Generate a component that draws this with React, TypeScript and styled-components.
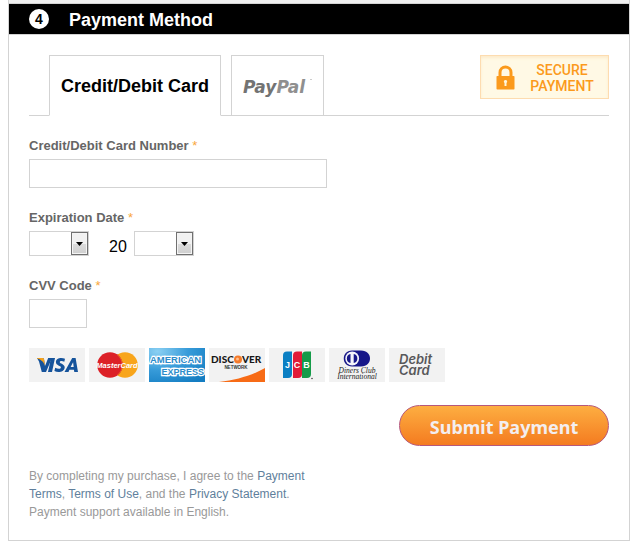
import React, { useId } from 'react';
import styled, { createGlobalStyle } from 'styled-components';

const line = '#d3d3d3';

const GlobalStyle = createGlobalStyle`
  *, *::before, *::after { box-sizing: border-box; }
  body {
    margin: 0;
    background: #fff;
    font-family: "Liberation Sans", Arial, sans-serif;
  }
`;

const Page = styled.main`
  padding: 0 13px 13px 8px;
`;

const Panel = styled.section`
  border: 1px solid ${line};
  border-top: 0;
`;

const PreviousEdge = styled.div`
  height: 4px;
  background: #f0f0f0;
  border-bottom: 1px solid ${line};
`;

const Header = styled.header`
  display: flex;
  align-items: center;
  gap: 20px;
  height: 31px;
  padding-left: 20px;
  background: #000;
  border-bottom: 1px solid ${line};
  color: #fff;
`;

const Step = styled.span`
  display: grid;
  place-items: center;
  width: 20px;
  height: 20px;
  border-radius: 50%;
  background: #fff;
  color: #000;
  font-size: 14px;
  font-weight: bold;
`;

const Title = styled.h2`
  margin: 0;
  padding-top: 2px;
  font-size: 18px;
  line-height: 20px;
`;

const Body = styled.form`
  padding: 20px 20px 19px;
`;

const TopRow = styled.div`
  display: flex;
  justify-content: space-between;
  align-items: flex-start;
  border-bottom: 1px solid ${line};
`;

const Tabs = styled.div`
  display: flex;
  gap: 10px;
  padding-left: 20px;
  margin-bottom: -1px;
`;

const Tab = styled.button<{ $active?: boolean }>`
  height: 61px;
  padding: 2px 11px 0;
  border: 1px solid ${line};
  border-bottom-color: ${(p) => (p.$active ? '#fff' : line)};
  background: #fff;
  color: #000;
  font: bold 18px "Liberation Sans", Arial, sans-serif;

  svg { display: block; }
`;

const Secure = styled.div`
  display: flex;
  align-items: center;
  justify-content: space-between;
  width: 129px;
  height: 44px;
  padding: 0 14px 0 15px;
  border: 1px solid #fddcb0;
  background: #fff9e5;
  box-shadow: inset 0 2px 3px #fdebcb;
  color: #fb9a1c;
  font: 500 14px/16px Roboto, "Liberation Sans", sans-serif;
  text-align: center;
`;

const SecureText = styled.span`
  width: 64px;
  padding-top: 2px;
`;

const Field = styled.div`
  display: flex;
  flex-direction: column;
  align-items: flex-start;
  gap: 3px;
  margin-top: 20px;
`;

const Label = styled.label`
  color: #666;
  font-size: 13px;
  font-weight: bold;
  line-height: 20px;
`;

const Star = styled.span`
  color: #f9a63a;
  font-weight: normal;
`;

const TextInput = styled.input<{ $width: number }>`
  width: ${(p) => p.$width}px;
  max-width: 100%;
  height: 29px;
  padding: 0 6px;
  border: 1px solid ${line};
  background: #fff;
  font: 14px "Liberation Sans", Arial, sans-serif;
`;

const DateRow = styled.div`
  display: flex;
  align-items: center;
  font-size: 16px;
`;

const Century = styled.span`
  padding: 6px 7px 0 20px;
  line-height: 19px;
`;

const SelectBox = styled.span`
  position: relative;
  display: inline-flex;
`;

const Select = styled.select`
  appearance: none;
  width: 60px;
  height: 25px;
  padding: 0 20px 0 4px;
  border: 1px solid ${line};
  border-radius: 0;
  background: #fff;
  font: 13px "Liberation Sans", Arial, sans-serif;
`;

const Arrow = styled.span`
  position: absolute;
  inset: 1px 1px 1px auto;
  display: grid;
  place-items: center;
  width: 17px;
  border: 1px solid #707070;
  box-shadow: inset 0 0 0 1px #f4f4f4;
  background: linear-gradient(#f1f1f1 0 50%, #dcdcdc 50%, #cfcfcf);
  pointer-events: none;
`;

const Cards = styled.ul`
  display: flex;
  flex-wrap: wrap;
  gap: 4px;
  margin: 20px 0 0;
  padding: 0;
  list-style: none;
`;

const Card = styled.li`
  width: 56px;
  height: 34px;
  background: #f2f2f2;

  svg { display: block; }
`;

const Submit = styled.button`
  display: block;
  width: 210px;
  height: 41px;
  margin: 23px 0 0 auto;
  padding: 2px 0 0;
  border: 1px solid #b5587c;
  border-radius: 21px;
  background: linear-gradient(#fdae41, #f47b20);
  color: #f3eef0;
  font: bold 18px "Noto Sans", sans-serif;
`;

const Terms = styled.p`
  max-width: 300px;
  margin: 21px 0 0;
  color: #999;
  font-size: 12px;
  line-height: 18px;
`;

const Link = styled.a`
  color: #5f7f9c;
  text-decoration: none;
`;

function PayPalLogo() {
  return (
    <svg width="69" height="32" viewBox="0 0 69 32" role="img" aria-label="PayPal">
      <text x="0" y="22" fontFamily="DejaVu Sans" fontWeight="bold" fontStyle="italic" fontSize="17" fill="#737373">
        Pay<tspan fill="#8f8f8f">Pal</tspan>
      </text>
      <path d="M67 8.500h2" stroke="#ccc" />
    </svg>
  );
}

function Padlock() {
  return (
    <svg width="19" height="25" viewBox="0 0 19 25" aria-hidden="true">
      <path d="M4 12V7.500a5.500 5.500 0 0 1 11 0V12" fill="none" stroke="#fb9a1c" strokeWidth="3" />
      <rect x="0.500" y="11" width="18" height="13.500" rx="0.800" fill="#fb9a1c" />
      <path d="M9.500 15a1.600 1.600 0 0 1 1 2.900V21h-2v-3.100a1.600 1.600 0 0 1 1-2.900Z" fill="#fff6dc" />
    </svg>
  );
}

function Logo({ name, children }: { name: string; children: React.ReactNode }) {
  return (
    <Card>
      <svg width="56" height="34" viewBox="0 0 56 34" role="img" aria-label={name}>
        {children}
      </svg>
    </Card>
  );
}

function Visa() {
  return (
    <Logo name="Visa">
      <path d="M22 10h4l-3 14h-4z" fill="#15539b" />
      <path d="M8 10h5.500c1 0 1.500.6 1.600 1.500L16 18l3.200-8H23l-6 14h-4.200L10 13.500Z" fill="#15539b" />
      <path d="M8 10h5.500c1 0 1.500.6 1.600 1.500L16 18c-1-3.500-3.500-6.500-8-7.500Z" fill="#f6a21b" />
      <path d="M36 10.700c-3.800-1.700-9-.8-9.100 3.200 0 3.700 5.100 3.600 5 5.500-.1 1.900-3.500 1.400-5.700.3l-.8 3.400c3.600 1.700 10 1.100 10.300-3.600.2-3.600-5-3.900-4.900-5.300.1-1.600 2.900-1.200 4.500-.4Z" fill="#15539b" />
      <path fillRule="evenodd" d="M43.200 10h3.400L49 24h-3.700l-.4-2.300h-4.500L39.500 24h-4Zm.9 4.200L41.600 19h3.100Z" fill="#15539b" />
    </Logo>
  );
}

function MasterCard() {
  return (
    <Logo name="MasterCard">
      <circle cx="36" cy="17" r="12.800" fill="#f8a51b" />
      <circle cx="21" cy="17" r="12.800" fill="#dc2027" />
      <path d="M28.500 7a12.800 12.800 0 0 1 0 20" fill="none" stroke="#e8632a" strokeWidth="1" />
      <text x="28" y="20" textAnchor="middle" fontFamily="Liberation Sans" fontWeight="bold" fontStyle="italic" fontSize="7.500" fill="#fff">MasterCard</text>
    </Logo>
  );
}

function Amex() {
  const id = useId();
  return (
    <Logo name="American Express">
      <defs>
        <radialGradient id={id} cx="0.150" cy="0.100" r="1.100">
          <stop offset="0" stopColor="#8bd0f3" />
          <stop offset="0.500" stopColor="#379bd9" />
          <stop offset="1" stopColor="#147dc2" />
        </radialGradient>
      </defs>
      <rect width="56" height="34" fill={`url(#${id})`} />
      <g fontFamily="Liberation Sans" fontWeight="bold" fontSize="9.500" fill="#2b8bca" stroke="#fff" strokeWidth="2.400" paintOrder="stroke">
        <text x="1" y="15">AMERICAN</text>
        <text x="55" y="27" textAnchor="end" fontSize="9">EXPRESS</text>
      </g>
    </Logo>
  );
}

function Discover() {
  return (
    <Logo name="Discover Network">
      <path d="M10 34C28 32 44 27 56 20v14Z" fill="#f76b16" />
      <g fontFamily="Lato" fontWeight="900" fontSize="10" fill="#171717">
        <text x="2" y="15">DISC</text>
        <text x="33" y="15">VER</text>
      </g>
      <circle cx="29" cy="11.500" r="4" fill="#f47a2a" />
      <circle cx="28.500" cy="11" r="1.500" fill="#ffbd8b" />
      <text x="27" y="21" textAnchor="middle" fontFamily="Liberation Sans" fontWeight="bold" fontSize="4.500" fill="#333">NETWORK</text>
    </Logo>
  );
}

function Jcb() {
  return (
    <Logo name="JCB">
      <path d="M18 3.500h5V26q0 4-4 4h-5V7.500q0-4 4-4Z" fill="#0b7fc3" />
      <path d="M28 3.500h5V26q0 4-4 4h-5V7.500q0-4 4-4Z" fill="#e11b38" />
      <path d="M37 3.500h5V26q0 4-4 4h-5V7.500q0-4 4-4Z" fill="#159b49" />
      <g fontFamily="Liberation Sans" fontWeight="bold" fontSize="9" fill="#fff" textAnchor="middle">
        <text x="18.500" y="20">J</text>
        <text x="28" y="20">C</text>
        <text x="37.500" y="20">B</text>
      </g>
      <circle cx="43" cy="30.500" r="0.700" fill="#222" />
    </Logo>
  );
}

function Diners() {
  return (
    <Logo name="Diners Club International">
      <path d="M23 2.500h9c12 0 12 16 0 16h-9c-11 0-11-16 0-16Z" fill="#171789" />
      <circle cx="23.200" cy="10.500" r="6.900" fill="#f5f5fb" />
      <path d="M21.500 6v9a4.600 4.600 0 0 1 0-9Zm3.200 0a4.600 4.600 0 0 1 0 9Z" fill="#171789" />
      <g fontFamily="Liberation Serif" fontStyle="italic" fontSize="7.500" fill="#222" textAnchor="middle">
        <text x="28" y="25">Diners Club</text>
        <text x="28" y="31">International</text>
      </g>
    </Logo>
  );
}

function Debit() {
  return (
    <Logo name="Debit Card">
      <g fontFamily="Inter" fontWeight="600" fontStyle="italic" fontSize="13" fill="#58585a">
        <text x="10" y="16">Debit</text>
        <text x="10" y="27">Card</text>
      </g>
    </Logo>
  );
}

function DatePart({ id, label, from, to }: { id?: string; label: string; from: number; to: number }) {
  const values = Array.from({ length: to - from + 1 }, (_, i) => String(from + i).padStart(2, '0'));
  return (
    <SelectBox>
      <Select id={id} aria-label={label} defaultValue="">
        <option value="" />
        {values.map((v) => <option key={v}>{v}</option>)}
      </Select>
      <Arrow>
        <svg width="7" height="4" viewBox="0 0 7 4"><path d="M0 0h7L3.500 4Z" /></svg>
      </Arrow>
    </SelectBox>
  );
}

export default function App() {
  return (
    <>
      <GlobalStyle />
      <Page>
        <Panel>
          <PreviousEdge />
          <Header>
            <Step>4</Step>
            <Title>Payment Method</Title>
          </Header>
          <Body onSubmit={(e) => e.preventDefault()}>
            <TopRow>
              <Tabs role="tablist">
                <Tab type="button" role="tab" aria-selected="true" $active>Credit/Debit Card</Tab>
                <Tab type="button" role="tab" aria-selected="false"><PayPalLogo /></Tab>
              </Tabs>
              <Secure>
                <Padlock />
                <SecureText>SECURE PAYMENT</SecureText>
              </Secure>
            </TopRow>
            <Field>
              <Label htmlFor="number">Credit/Debit Card Number <Star>*</Star></Label>
              <TextInput id="number" $width={298} inputMode="numeric" />
            </Field>
            <Field>
              <Label htmlFor="month">Expiration Date <Star>*</Star></Label>
              <DateRow>
                <DatePart id="month" label="Expiration month" from={1} to={12} />
                <Century>20</Century>
                <DatePart label="Expiration year" from={24} to={40} />
              </DateRow>
            </Field>
            <Field>
              <Label htmlFor="cvv">CVV Code <Star>*</Star></Label>
              <TextInput id="cvv" $width={58} inputMode="numeric" />
            </Field>
            <Cards>
              <Visa />
              <MasterCard />
              <Amex />
              <Discover />
              <Jcb />
              <Diners />
              <Debit />
            </Cards>
            <Submit type="submit">Submit Payment</Submit>
            <Terms>
              By completing my purchase, I agree to the <Link href="#payment-terms">Payment Terms</Link>,{' '}
              <Link href="#terms">Terms of Use</Link>, and the <Link href="#privacy">Privacy Statement</Link>.
              Payment support available in English.
            </Terms>
          </Body>
        </Panel>
      </Page>
    </>
  );
}
